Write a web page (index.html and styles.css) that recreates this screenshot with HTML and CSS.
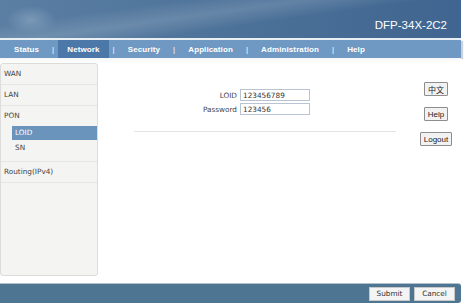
FILE: index.html
```html
<!DOCTYPE html>
<html lang="en">
	<head>
		<meta charset="UTF-8" />
		<meta name="viewport" content="width=device-width, initial-scale=1.0" />
		<title>DFP-34X-2C2</title>
		<link rel="stylesheet" href="styles.css">
	</head>
	<body>
		<div id="page">
			<header class="banner">
				<div class="cloud"></div>
				<div class="model">DFP-34X-2C2</div>
			</header>
			<nav class="menu">
				<a class="tab">Status</a><span class="sep">|</span>
				<a class="tab active">Network</a><span class="sep">|</span>
				<a class="tab">Security</a><span class="sep">|</span>
				<a class="tab">Application</a><span class="sep">|</span>
				<a class="tab">Administration</a><span class="sep">|</span>
				<a class="tab">Help</a>
			</nav>
			<div class="strip"></div>
			<div class="main">
				<aside class="side">
					<div class="item">WAN</div>
					<div class="item">LAN</div>
					<div class="group">
						<div class="item head">PON</div>
						<div class="sub selected">LOID</div>
						<div class="sub">SN</div>
					</div>
					<div class="item">Routing(IPv4)</div>
				</aside>
				<section class="content">
					<div class="form">
						<label>LOID</label>
						<input type="text" value="123456789">
						<label>Password</label>
						<input type="text" value="123456">
					</div>
					<div class="rule"></div>
				</section>
				<div class="tools">
					<button class="btn">中文</button>
					<button class="btn">Help</button>
					<button class="btn">Logout</button>
				</div>
			</div>
			<footer class="bar">
				<button class="action">Submit</button>
				<button class="action">Cancel</button>
			</footer>
		</div>
	</body>
</html>
```

FILE: styles.css
```css
body {
	margin: 0;
	background: #fff;
	font-family: "DejaVu Sans", Verdana, sans-serif;
}
#page {
	width: 461px;
}

.banner {
	position: relative;
	height: 38px;
	background:
		linear-gradient(172deg, rgba(255,255,255,0) 25%, rgba(255,255,255,0.14) 42%, rgba(255,255,255,0) 58%),
		linear-gradient(90deg, #5b7fa3 0%, #4d7299 50%, #3f6590 100%);
	border-bottom: 2px solid #e9eef3;
}
.cloud {
	position: absolute;
	left: 6px;
	top: 6px;
	width: 50px;
	height: 28px;
	border-radius: 50%;
	background: radial-gradient(ellipse at center, rgba(150,175,200,0.55) 0%, rgba(150,175,200,0) 70%);
}
.model {
	position: absolute;
	right: 14px;
	top: 19px;
	color: #fff;
	font-family: "Liberation Sans", Arial, sans-serif;
	font-size: 11.5px;
}

.menu {
	display: flex;
	align-items: center;
	height: 18px;
	padding-left: 5px;
	background: #6f98c3;
	box-shadow: 2px 1px 1px #c9d2db;
	color: #fff;
	font-family: "Liberation Sans", Arial, sans-serif;
	font-size: 8px;
	font-weight: bold;
	letter-spacing: 0.1px;
}
.tab {
	display: flex;
	align-items: center;
	height: 100%;
	padding: 0 9px;
}
.tab.active {
	background: #4b78a9;
}
.sep {
	font-weight: normal;
	padding: 0 4px;
}

.strip {
	height: 5px;
	background: linear-gradient(#f6f6f6, #fff);
}

.main {
	display: flex;
	height: 213px;
}
.side {
	width: 96px;
	background: #f4f4f2;
	border: 1px solid #dcdcdc;
	border-radius: 3px;
	font-size: 7.3px;
	color: #444;
}
.item {
	height: 20px;
	line-height: 20px;
	padding-left: 3px;
	border-bottom: 1px solid #e6e6e4;
}
.group {
	border-bottom: 1px solid #e6e6e4;
	padding-bottom: 6px;
}
.group .head {
	border-bottom: none;
}
.sub {
	height: 14px;
	line-height: 14px;
	margin-left: 11px;
	padding-left: 3px;
}
.sub.selected {
	background: #6b94bd;
	color: #fff;
	margin-bottom: 1px;
}

.content {
	flex: 1;
	padding: 26px 0 0 36px;
}
.form {
	display: grid;
	grid-template-columns: 103px 70px;
	column-gap: 3px;
	row-gap: 2px;
	align-items: center;
	font-size: 7.3px;
	color: #444;
}
.form label {
	text-align: right;
}
.form input {
	box-sizing: border-box;
	width: 70px;
	height: 12px;
	margin: 0;
	padding: 0 2px;
	border: 1px solid #b8c4d2;
	font-family: "DejaVu Sans", Verdana, sans-serif;
	font-size: 7.3px;
	color: #333;
}
.rule {
	width: 262px;
	margin-top: 16px;
	border-top: 1px solid #e4e4e4;
}

.tools {
	width: 50px;
	display: flex;
	flex-direction: column;
	align-items: center;
	padding-top: 19px;
	gap: 11px;
}
.btn {
	height: 14px;
	margin: 0;
	padding: 0 3px;
	background: #f2f2f2;
	border: 1px solid #8d8d8d;
	border-radius: 1px;
	font-family: "Liberation Sans", Arial, "Noto Sans CJK SC", sans-serif;
	font-size: 8px;
	color: #222;
}

.bar {
	display: flex;
	justify-content: flex-end;
	align-items: center;
	gap: 4px;
	height: 19px;
	margin-top: 7px;
	padding-right: 6px;
	background: #4e7592;
	border-top: 1px solid #b4c0ca;
	border-radius: 0 3px 3px 0;
}
.action {
	width: 41px;
	height: 14px;
	margin: 0;
	padding: 0;
	background: #f4f4f4;
	border: 1px solid #c8c8c8;
	font-family: "DejaVu Sans", Verdana, sans-serif;
	font-size: 7.3px;
	color: #333;
}
```
